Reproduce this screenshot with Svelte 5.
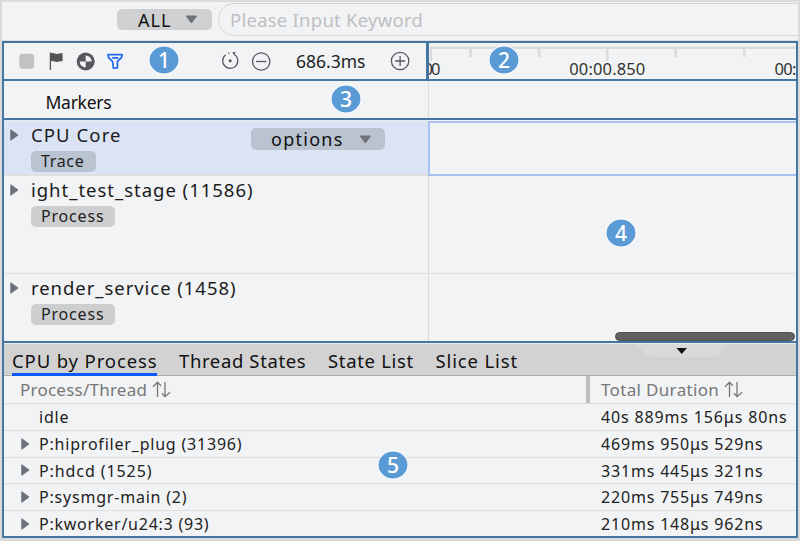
<script>
  const tabs = [
    { label: 'CPU by Process', width: 145, active: true },
    { label: 'Thread States', width: 127 },
    { label: 'State List', width: 85.5 },
    { label: 'Slice List', width: 82 },
  ];

  const rows = [
    { name: 'idle', width: 30, duration: '40s 889ms 156μs 80ns', dw: 186, leaf: true },
    { name: 'P:hiprofiler_plug (31396)', width: 203, duration: '469ms 950μs 529ns', dw: 162 },
    { name: 'P:hdcd (1525)', width: 113, duration: '331ms 445μs 321ns', dw: 162 },
    { name: 'P:sysmgr-main (2)', width: 148, duration: '220ms 755μs 749ns', dw: 162 },
    { name: 'P:kworker/u24:3 (93)', width: 170, duration: '210ms 148μs 962ns', dw: 162 },
  ];

  const callouts = [
    { n: 1, x: 164, y: 60 },
    { n: 2, x: 504, y: 60 },
    { n: 3, x: 346, y: 99 },
    { n: 4, x: 621, y: 233 },
    { n: 5, x: 393, y: 465 },
  ];

  // Spreads the letters of a label so that it takes the given width.
  function fit(node, width) {
    const natural = node.getBoundingClientRect().width;
    node.style.letterSpacing = `${(width - natural) / (node.textContent.length - 0.5)}px`;
  }
</script>

{#snippet arrow()}
  <svg class="arrow" width="9" height="12" viewBox="0 0 9 12"><path d="M.8.8 8 6 .8 11.2Z" fill="#6d717c" stroke="#6d717c" stroke-linejoin="round" /></svg>
{/snippet}

{#snippet caret()}
  <svg width="13" height="9" viewBox="0 0 13 9"><path d="M1.2 1h10.4L6.4 8Z" fill="#70737a" stroke="#70737a" stroke-linejoin="round" /></svg>
{/snippet}

{#snippet sort()}
  <svg class="sort" width="19" height="17" viewBox="0 0 19 17" fill="none" stroke="#777" stroke-width="1.3"><path d="M5.5 16V1.2M1 5.8 5.5 1.2 9 4.8M13 1v14.8M9.8 12.2l3.3 3.5L18 11.2" /></svg>
{/snippet}

<div class="app">
  <div class="search-bar">
    <div class="select all"><span use:fit={33}>ALL</span>{@render caret()}</div>
    <div class="search"><span use:fit={193}>Please Input Keyword</span></div>
  </div>

  <div class="frame">
    <div class="toolbar-row">
      <div class="toolbar">
        <svg class="tools" width="112" height="36" viewBox="15 43 112 36">
          <rect x="19.2" y="53.8" width="15" height="15" rx="3.5" fill="#c1c2c4" />
          <path d="M50.4 52.5V70" stroke="#555" stroke-width="1.3" />
          <path d="M51 53.3c2.8-1 4.2.8 6.3.6 1.8-.2 3-.9 5.3-.6v8c-2.5-.3-3.4.5-5.3.6-2.5.1-3.5-1.5-6.3-.7Z" fill="#555" />
          <circle cx="85.7" cy="61.5" r="9" fill="#56585b" />
          <path d="M85.7 55.5v6h6A6 6 0 0 0 85.7 55.5ZM85.7 67.5v-6h-6a6 6 0 0 0 6 6Z" fill="#f1f3f5" />
          <path d="M108 54.7h14.2l-.6 2.6-4.2 4.4v6.2l-4 .2-.8-6.4-4.1-4.4Zm4.2 3.2h6.2" fill="none" stroke="#2468f2" stroke-width="1.7" stroke-linejoin="round" />
        </svg>
        <div class="zoomer">
          <svg width="54" height="22" viewBox="220 50 54 22" fill="none" stroke="#55585c" stroke-width="1.3">
            <path d="M225.7 54.7a7.6 7.6 0 1 0 8.5-.4M228.1 53.3l1.2-.3" />
            <path d="m232.3 52.4 3-.7-.6 3.8Z" fill="#55585c" stroke="none" />
            <circle cx="230.2" cy="60.7" r="1.5" fill="#555" stroke="none" />
            <circle cx="261.2" cy="61.5" r="8.7" />
            <path d="M256 61.5h10.4" />
          </svg>
          <span class="scale" use:fit={68}>686.3ms</span>
          <svg width="20" height="22" viewBox="390.5 50.5 20 22" fill="none" stroke="#55585c" stroke-width="1.3">
            <circle cx="400.6" cy="61.5" r="8.7" />
            <path d="M395.5 61.5h10.2M400.6 56.4v10.2" />
          </svg>
        </div>
      </div>
      <svg class="ruler" width="367" height="36" viewBox="429 43 367 36">
        <path d="M430 47.8h366" stroke="#d9dadc" stroke-width="2.4" />
        <path d="M431 48v13M607.4 48v13" stroke="#d9dadc" stroke-width="2.4" />
        <path d="M470.6 48v9M539 48v9M675.7 48v9M744.2 48v9" stroke="#d9dadc" stroke-width="2.4" />
        <g font-size="16.5" fill="#333">
          <text x="440.5" y="74.8" text-anchor="end" textLength="17">00</text>
          <text x="607.3" y="74.8" text-anchor="middle" textLength="76">00:00.850</text>
          <text x="774.5" y="74.8" textLength="22">00:</text>
        </g>
      </svg>
    </div>

    <div class="markers"><span use:fit={66}>Markers</span></div>

    <div class="tracks">
      <div class="track selected">
        <div class="head">
          {@render arrow()}
          <div class="info">
            <span class="title" use:fit={90}>CPU Core</span>
            <div class="tag"><span use:fit={43}>Trace</span></div>
          </div>
          <div class="select options"><span use:fit={72}>options</span>{@render caret()}</div>
        </div>
        <div class="lane"></div>
      </div>
      <div class="track stage">
        <div class="head">
          {@render arrow()}
          <div class="info">
            <span class="title" use:fit={222}>ight_test_stage (11586)</span>
            <div class="tag"><span use:fit={63}>Process</span></div>
          </div>
        </div>
        <div class="lane"></div>
      </div>
      <div class="track render">
        <div class="head">
          {@render arrow()}
          <div class="info">
            <span class="title" use:fit={205}>render_service (1458)</span>
            <div class="tag"><span use:fit={63}>Process</span></div>
          </div>
        </div>
        <div class="lane"><div class="scrollbar"></div></div>
      </div>
    </div>

    <div class="tabs">
      {#each tabs as tab}
        <div class="tab" class:active={tab.active} style:width="{tab.width}px"><span use:fit={tab.width}>{tab.label}</span></div>
      {/each}
      <svg class="collapse" width="96" height="15" viewBox="0 0 96 15">
        <path d="M0 0h96c-9 1-6 13-16 13H17C7 13 9 1 0 0Z" fill="#d9d9d9" />
        <path d="M42.500 4h10.400l-5.200 6Z" fill="#111" />
      </svg>
    </div>

    <div class="table">
      <div class="line header">
        <div class="name"><span use:fit={127}>Process/Thread</span>{@render sort()}</div>
        <div class="duration"><span use:fit={118}>Total Duration</span>{@render sort()}</div>
      </div>
      {#each rows as row}
        <div class="line">
          <div class="name">
            <div class="toggle">{#if !row.leaf}{@render arrow()}{/if}</div>
            <span use:fit={row.width}>{row.name}</span>
          </div>
          <div class="duration"><span use:fit={row.dw}>{row.duration}</span></div>
        </div>
      {/each}
    </div>
  </div>

  {#each callouts as c}
    <div class="callout" style:left="{c.x}px" style:top="{c.y}px">{c.n}</div>
  {/each}
</div>

<style>
  :global(body) { margin: 0; overflow: hidden; }
  .app {
    position: relative;
    box-sizing: border-box;
    width: 800px;
    height: 541px;
    padding: 0 2px;
    overflow: hidden;
    background: #dbdbdb;
    font-family: "Noto Sans", sans-serif;
    font-size: 16px;
    color: #222;
    white-space: nowrap;
  }
  .app svg { display: block; flex: none; }
  span { display: inline-block; flex: none; }
  .search-bar {
    display: flex;
    box-sizing: border-box;
    height: 41px;
    border-top: 2px solid #dbdbdb;
    background: #f1f3f5;
    box-shadow: inset 0 -1px #dcdcde;
    overflow: hidden;
  }
  .select {
    display: flex;
    flex: none;
    align-items: center;
    box-sizing: border-box;
    border-radius: 5px;
    background: #cfd0d2;
    color: #111;
    font-size: 18px;
  }
  .all { width: 95px; height: 21px; margin: 7px 6px 0 115px; padding-left: 21px; gap: 13px; }
  .search {
    box-sizing: border-box;
    width: 620px;
    height: 33px;
    flex: none;
    margin-top: 1px;
    padding-left: 11px;
    border: 1.5px solid #d5d6d8;
    border-radius: 16px;
    line-height: 31px;
    font-size: 18.5px;
    color: #bfc0c2;
  }
  .frame {
    box-sizing: border-box;
    width: 796px;
    height: 497px;
    border: 2px solid #4575a1;
    background: #f1f3f5;
    overflow: hidden;
  }
  .toolbar-row { display: flex; height: 36px; border-bottom: 2px solid #4575a1; }
  .toolbar { display: flex; width: 422px; border-right: 3px solid #4575a1; }
  .tools { margin-left: 11px; }
  .zoomer { display: flex; align-items: center; margin-left: 93px; }
  .scale { width: 68px; margin: 0 26px 0 22px; line-height: 36px; font-size: 17.5px; }
  .markers {
    height: 37px;
    padding-left: 41.5px;
    border-bottom: 2px solid #4575a1;
    line-height: 42px;
    font-size: 17.5px;
    color: #111;
    background: linear-gradient(#dcdddf, #dcdddf) 424px 0 / 1px 100% no-repeat;
  }
  .tracks { height: 221px; border-bottom: 2px solid #4575a1; overflow: hidden; }
  .track { display: flex; box-sizing: border-box; border-bottom: 1px solid #dedfe1; }
  .selected { height: 56px; border-bottom-width: 2px; }
  .stage { height: 98px; }
  .render { height: 67px; border-bottom: 0; }
  .head { display: flex; box-sizing: border-box; width: 424px; padding: 8px 0 0 6px; }
  .selected .head { width: 424px; background: #dbe4f5; box-shadow: inset 0 1px #e8eaee; }
  .stage .head, .render .head { padding-top: 7px; }
  .lane { display: flex; flex: 1; align-items: flex-end; justify-content: flex-end; border-left: 1px solid #d9dadc; }
  .selected .lane { box-sizing: border-box; height: 55px; margin-top: 1px; border: 2px solid #a9c2f4; border-right: 0; }
  .info { margin: -6px 0 0 12px; width: 220px; }
  .title { line-height: 26px; height: 26px; font-size: 18.5px; color: #1b1b1b; }
  .head .arrow { margin-top: 1px; }
  .tag {
    display: flex;
    box-sizing: border-box;
    height: 21px;
    width: 84px;
    margin-top: 3px;
    padding-left: 10px;
    border-radius: 5px;
    background: #cdced0;
    line-height: 20px;
  }
  .selected .tag { width: 65px; background: #bac3d0; }
  .options { width: 134px; height: 22px; margin-top: 0; padding-left: 20px; gap: 15px; background: #bac3d0; }
  .scrollbar { box-sizing: border-box; width: 180px; height: 9px; margin: 0 1px 0 0; border-radius: 5px; background: #606060; border: 1px solid #505050; }
  .tabs {
    display: flex;
    position: relative;
    box-sizing: border-box;
    height: 33px;
    padding-left: 8px;
    gap: 22px;
    background: #d2d2d2;
    border-bottom: 1px solid #adadad;
    box-shadow: inset 0 1px #e8eaec;
  }
  .tab { box-sizing: border-box; height: 33px; line-height: 36px; font-size: 18.5px; color: #111; z-index: 1; }
  .active { border-bottom: 3px solid #0a59f7; }
  .collapse { position: absolute; left: 630px; top: 1px; }
  .line { display: flex; box-sizing: border-box; height: 26.8px; border-bottom: 1px solid #dddee0; line-height: 26px; }
  .header { height: 28px; line-height: 27px; color: #777; font-size: 17px; }
  .name { display: flex; box-sizing: border-box; width: 582px; align-items: center; padding-left: 17px; }
  .header .name { width: 586px; padding-left: 16px; border-right: 4px solid #bdbec0; }
  .toggle { width: 18px; }
  .duration { display: flex; align-items: center; padding-left: 15px; }
  .header .duration { padding-left: 11px; }
  .header span { margin-right: 5px; }
  .callout {
    position: absolute;
    width: 29px;
    height: 27px;
    border: 1.5px solid #fff;
    border-radius: 50%;
    transform: translate(-50%, -50%);
    background: #5b9bd5;
    color: #fff;
    text-align: center;
    font-size: 21px;
    font-weight: 500;
    line-height: 27px;
  }
</style>
